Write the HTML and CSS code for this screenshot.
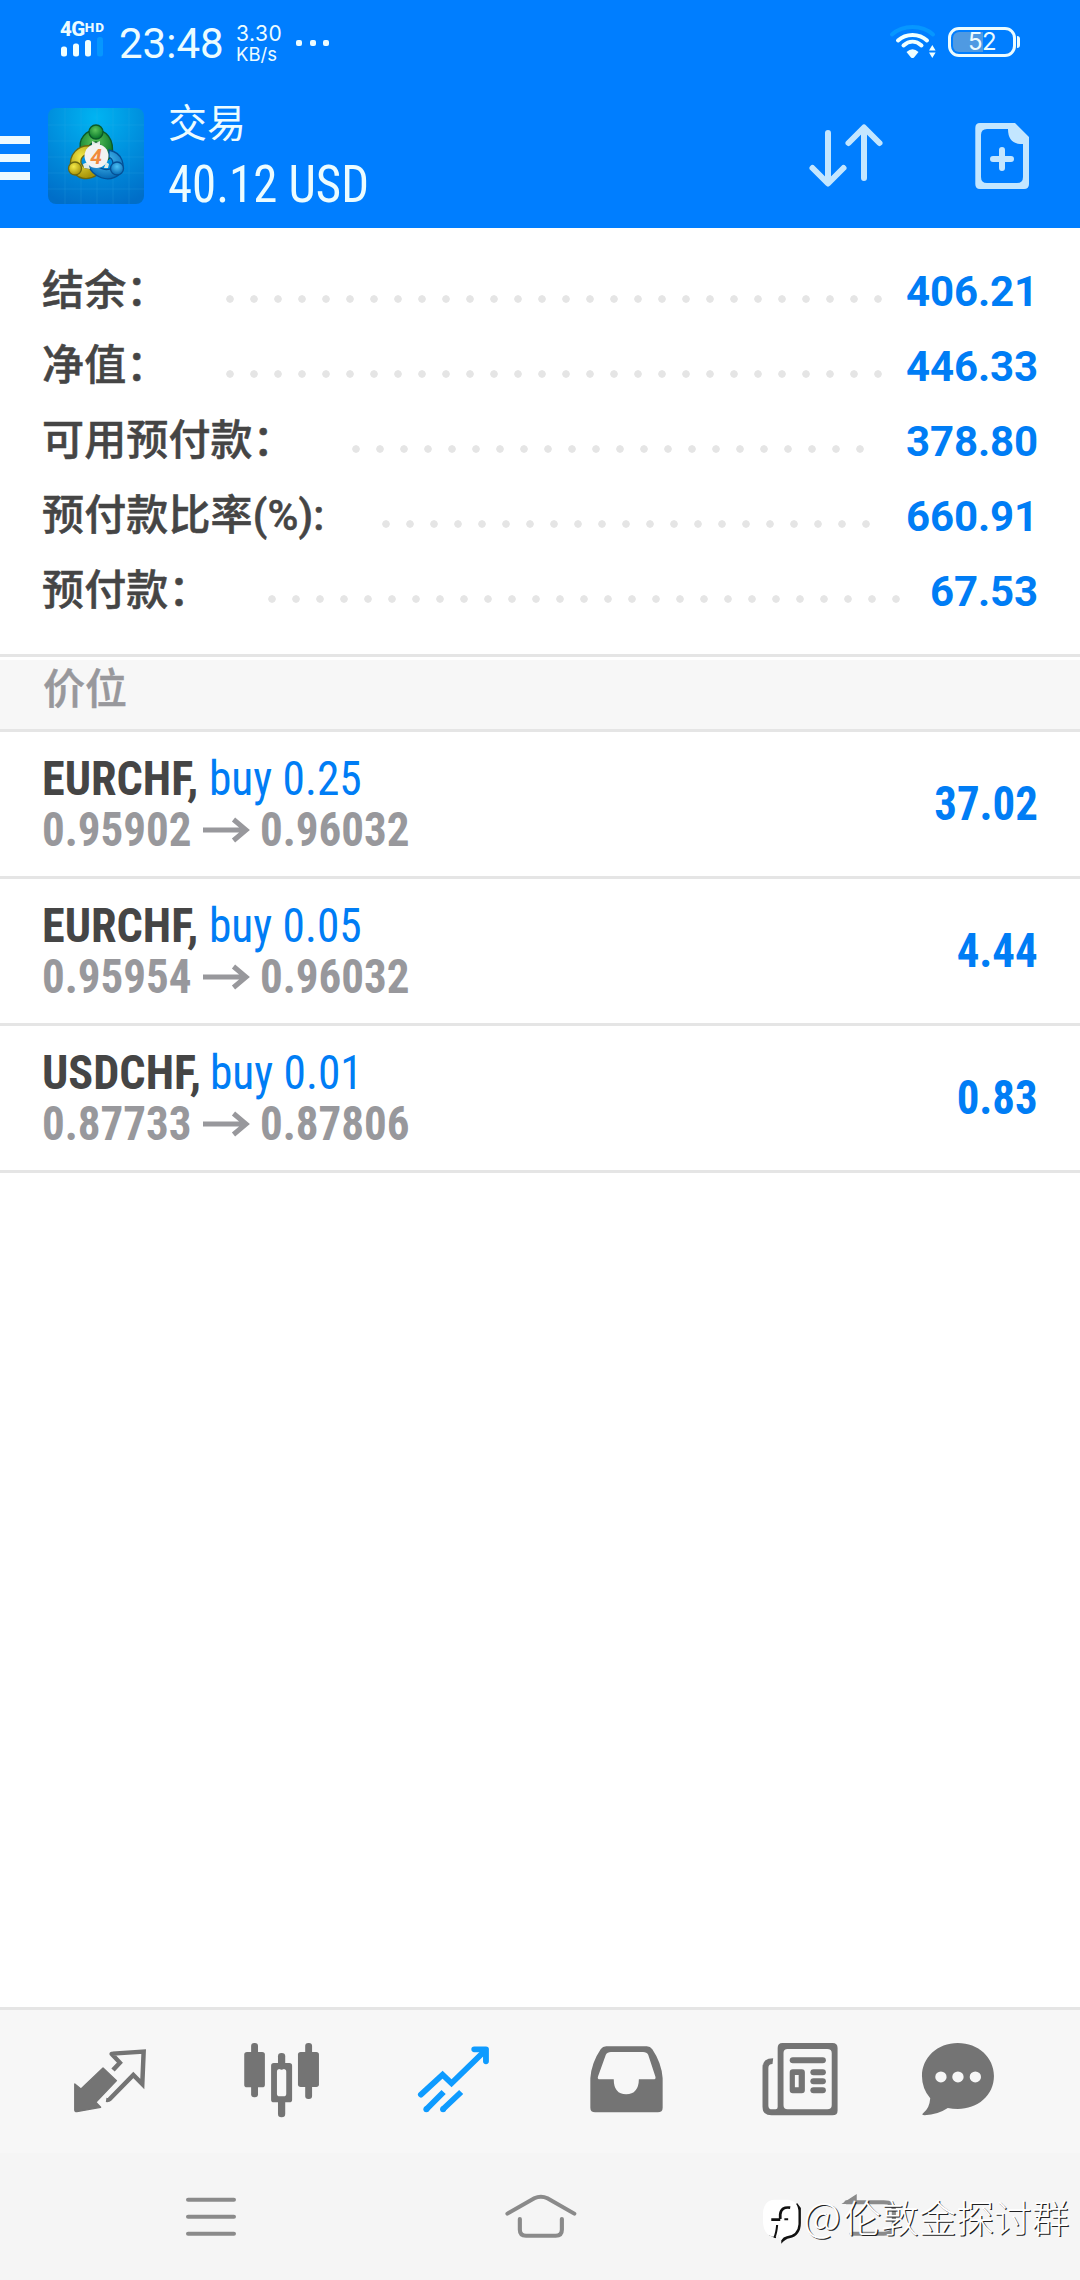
FILE: index.html
```html
<!DOCTYPE html>
<html lang="zh-CN">
<head>
<meta charset="utf-8">
<title>交易</title>
<link rel="stylesheet" href="styles.css">
</head>
<body>
<div class="screen">
  <header class="top">
    <div class="status">
      <div class="cell">
        <div class="net">4G<span class="hd">HD</span></div>
        <svg class="bars" viewBox="0 0 42 20" width="42" height="20">
          <g fill="#f0ffff"><rect x="0" y="9.500" width="6" height="10" rx="2.500"/><rect x="12" y="6.500" width="6" height="13" rx="2.500"/><rect x="24" y="3" width="6" height="16.500" rx="2.500"/></g>
          <rect x="36" y="0" width="6" height="19.500" rx="2.500" fill="#0697ff"/>
        </svg>
      </div>
      <div class="clock">23:48</div>
      <div class="speed"><span class="rate">3.30</span><span class="unit">KB/s</span></div>
      <div class="more"><i></i><i></i><i></i></div>
      <svg class="wifi" viewBox="889 24 50 36" width="50" height="36" fill="none" stroke-linecap="round">
        <path d="M892 34.500C903 24.500 922 24.500 933 34.500" stroke="#0697ff" stroke-width="4"/>
        <path d="M898 40.500C906 33 919 33 927 40.500M903.500 45.500C909 40.500 916 40.500 921.500 45.500" stroke="#f0ffff" stroke-width="4"/>
        <path d="M906.500 52Q912.500 46.500 918.500 52L914 57.500Q912.500 58.500 911 57.500Z" fill="#f0ffff"/>
        <path d="M929 50.500L932.300 45L935.600 50.500ZM929 52.500L932.300 58L935.600 52.500Z" fill="#f0ffff"/>
      </svg>
      <div class="battery"><span>52</span></div>
    </div>
    <div class="bar">
      <svg class="burger" viewBox="0 0 30 44" width="30" height="44" fill="#ecfaff"><rect width="30" height="8"/><rect y="18" width="30" height="8"/><rect y="36" width="30" height="8"/></svg>
      <svg class="logo" viewBox="48 108 96 96" width="96" height="96">
        <defs>
          <radialGradient id="bg" cx=".5" cy=".1" r=".95"><stop offset="0" stop-color="#00b4f2"/><stop offset=".5" stop-color="#0090de"/><stop offset="1" stop-color="#006ec8"/></radialGradient>
          <radialGradient id="g" cx=".45" cy=".35" r=".6"><stop offset="0" stop-color="#5cc45c"/><stop offset="1" stop-color="#0b7a2c"/></radialGradient>
          <radialGradient id="y" cx=".4" cy=".35" r=".65"><stop offset="0" stop-color="#f4ea4a"/><stop offset="1" stop-color="#a89408"/></radialGradient>
          <radialGradient id="b" cx=".5" cy=".35" r=".65"><stop offset="0" stop-color="#4cc0f4"/><stop offset="1" stop-color="#0468b4"/></radialGradient>
        </defs>
        <rect x="48" y="108" width="96" height="96" rx="8" fill="url(#bg)"/>
        <path d="M65 108V204M81 108V204M97 108V204M113 108V204M129 108V204M48 125H144M48 141H144M48 157H144M48 173H144M48 189H144" stroke="#3cb4f0" stroke-opacity=".18" fill="none"/>
        <g stroke-width="1.300">
          <path d="M81 152C77 138 87 130 96 130S115 138 112 156L104 163Q104 144 96 142Q88 143 87 152Z" fill="url(#g)" stroke="#0b5a2a"/>
          <path d="M92 146C78 144 68 155 71 168C76 180 88 181 97 175L92 168Q84 170 81 163Q80 154 92 154Z" fill="url(#y)" stroke="#6a6810"/>
          <path d="M109 150C123 153 126 166 120 174C108 184 93 177 88 165L97 166Q106 172 112 168Q115 160 109 157Z" fill="url(#b)" stroke="#064f94"/>
          <circle cx="96" cy="132" r="7" fill="url(#g)" stroke="#0b5a2a"/>
          <circle cx="75" cy="168.500" r="6.500" fill="url(#y)" stroke="#6a6810"/>
          <circle cx="117" cy="168.500" r="6.500" fill="url(#b)" stroke="#064f94"/>
        </g>
        <path d="M92 141L96 143L100 141V146H92ZM83 164L88 162L90 169L84 168ZM104 168L106 162L109 164L108 168Z" fill="#dfe9e4"/>
        <circle cx="96.500" cy="156" r="12" fill="#f2f2f2"/>
        <text x="96" y="163.500" text-anchor="middle" class="logo-num">4</text>
      </svg>
      <div class="titles">
        <div class="title">交易</div>
        <div class="sum cond">40.12 USD</div>
      </div>
      <svg class="sort" viewBox="808 122 76 68" width="76" height="68" fill="none" stroke="#c3e6ff" stroke-width="6" stroke-linecap="round" stroke-linejoin="round">
        <path d="M828 133V183M812.500 168L828 183.500L843.500 168M864 178V128M848.500 143L864 127.500L879.500 143"/>
      </svg>
      <svg class="order" viewBox="974 122 56 68" width="56" height="68">
        <path fill="#c3e6ff" fill-rule="evenodd" d="M980 123H1015L1029 137V184Q1029 189 1024 189H980Q975.300 189 975.300 184V128Q975.300 123 980 123ZM987 129Q981 129 981 135V177Q981 183 987 183H1017Q1023 183 1023 177V144H1020Q1008 143 1008 129Z"/>
        <path d="M1002 150V168M993 159H1011" stroke="#c3e6ff" stroke-width="6" stroke-linecap="round"/>
      </svg>
    </div>
  </header>

  <section class="account">
    <div class="line"><span class="label">结余：</span><i class="dots" style="--n:28"></i><b class="amount">406.21</b></div>
    <div class="line"><span class="label">净值：</span><i class="dots" style="--n:28"></i><b class="amount">446.33</b></div>
    <div class="line"><span class="label">可用预付款：</span><i class="dots" style="--n:22"></i><b class="amount">378.80</b></div>
    <div class="line"><span class="label">预付款比率(%):</span><i class="dots" style="--n:21"></i><b class="amount">660.91</b></div>
    <div class="line"><span class="label">预付款：</span><i class="dots" style="--n:27"></i><b class="amount">67.53</b></div>
  </section>

  <h2 class="group">价位</h2>

  <ul class="positions">
    <li class="pos">
      <div class="info">
        <div class="deal cond"><b class="symbol">EURCHF,</b> <span class="buy">buy 0.25</span></div>
        <div class="prices cond"><span>0.95902</span><svg class="to" viewBox="0 0 46 26" width="46" height="26"><path d="M0 13H43M30.500 2.500L43 13L30.500 23.500"/></svg><span>0.96032</span></div>
      </div>
      <b class="profit cond">37.02</b>
    </li>
    <li class="pos">
      <div class="info">
        <div class="deal cond"><b class="symbol">EURCHF,</b> <span class="buy">buy 0.05</span></div>
        <div class="prices cond"><span>0.95954</span><svg class="to" viewBox="0 0 46 26" width="46" height="26"><path d="M0 13H43M30.500 2.500L43 13L30.500 23.500"/></svg><span>0.96032</span></div>
      </div>
      <b class="profit cond">4.44</b>
    </li>
    <li class="pos">
      <div class="info">
        <div class="deal cond"><b class="symbol">USDCHF,</b> <span class="buy">buy 0.01</span></div>
        <div class="prices cond"><span>0.87733</span><svg class="to" viewBox="0 0 46 26" width="46" height="26"><path d="M0 13H43M30.500 2.500L43 13L30.500 23.500"/></svg><span>0.87806</span></div>
      </div>
      <b class="profit cond">0.83</b>
    </li>
  </ul>

  <nav class="tabs">
    <a class="tab"><svg preserveAspectRatio="none" viewBox="194.400 140 250 250">
      <path fill="#747474" stroke="#747474" stroke-width="4" stroke-linejoin="round" d="M217 281L235 296L299 233L338 271L278 336L292 351L223 364Q217 364 217 359Z"/>
      <path fill="none" stroke="#747474" stroke-width="13" d="M328 239L348 217L325 192Q323 190 327 190L417 184L413 281L387 254L318 327Q315 330 308 329"/>
    </svg></a>
    <a class="tab"><svg preserveAspectRatio="none" viewBox="693.800 140 250 250" fill="#747474">
      <rect x="729" y="158" width="20" height="163" rx="9"/><rect x="709" y="185" width="60" height="106" rx="8"/>
      <rect x="886" y="158" width="20" height="168" rx="9"/><rect x="865" y="185" width="61" height="105" rx="8"/>
      <rect x="807" y="188" width="21" height="50" rx="10"/><rect x="807" y="325" width="21" height="56" rx="10"/>
      <path fill-rule="evenodd" d="M795 218H840Q848 218 848 226V328Q848 336 840 336H795Q787 336 787 328V226Q787 218 795 218ZM812 236Q804 236 804 244V310Q804 318 812 318H823Q831 318 831 310V244Q831 236 823 236Z"/>
    </svg></a>
    <a class="tab"><svg preserveAspectRatio="none" viewBox="1193.300 140 250 250" fill="none" stroke="#0e9bff" stroke-width="17">
      <path d="M1222 313L1285 253L1311 279L1408 181" stroke-linecap="round"/>
      <path d="M1377 177H1411V213" stroke-linecap="round" stroke-linejoin="round"/>
      <path d="M1288 305L1238 357M1339 305L1286 357"/>
      <g fill="#0e9bff" stroke="none"><circle cx="1238" cy="357" r="8.800"/><circle cx="1286.500" cy="357" r="8.800"/></g>
    </svg></a>
    <a class="tab"><svg preserveAspectRatio="none" viewBox="124.700 140 250 250" fill="#747474">
      <path fill-rule="evenodd" d="M192 168H310Q320 168 326 177Q353 218 356 264V352Q356 366 342 366H160Q146 366 146 352V264Q149 218 176 177Q182 168 192 168ZM206 185Q195 185 191 193L168 259Q166 267 174 267H214Q214 312 250 312T287 267H329Q337 267 335 259L314 193Q310 185 299 185Z"/>
    </svg></a>
    <a class="tab"><svg preserveAspectRatio="none" viewBox="624.200 140 250 250" fill="#747474">
      <path fill-rule="evenodd" d="M704 158H849Q864 158 864 173V361Q864 375 849 375H672Q646 375 646 349V232Q646 204 677 204L675 221Q663 221 663 233V346Q663 357 674 357H684Q690 357 690 350V173Q690 158 704 158ZM719 176Q707 176 707 188V344Q707 357 719 357H834Q847 357 847 344V188Q847 176 834 176Z"/>
      <rect x="725" y="201" width="105" height="18" rx="9"/><rect x="785" y="237" width="45" height="18" rx="9"/><rect x="785" y="264" width="45" height="18" rx="9"/><rect x="785" y="291" width="45" height="18" rx="9"/>
      <path fill-rule="evenodd" d="M734 237H760Q769 237 769 246V300Q769 309 760 309H734Q725 309 725 300V246Q725 237 734 237ZM740 254V291H751V254Z"/>
    </svg></a>
    <a class="tab"><svg preserveAspectRatio="none" viewBox="1123.600 140 250 250" fill="#747474">
      <path d="M1213 158C1273 158 1318 202 1318 257C1318 316 1270 356 1213 356Q1198 356 1184 353Q1155 373 1117 375Q1105 374 1113 368Q1131 354 1133 324Q1109 295 1109 257C1109 202 1154 158 1213 158Z"/>
      <g fill="#f7f7f7"><circle cx="1164" cy="260" r="16.500"/><circle cx="1213.500" cy="260" r="16.500"/><circle cx="1264" cy="260" r="16.500"/></g>
    </svg></a>
  </nav>

  <nav class="system">
    <svg class="sys" preserveAspectRatio="none" viewBox="540 610 145 145" width="50" height="48.300"><path d="M546 630H679M546 681H679M546 732H679"/></svg>
    <svg class="sys" preserveAspectRatio="none" viewBox="1464 610 209 145" width="72" height="48.300"><path d="M1474 672L1552 626Q1571 616 1590 626L1668 672M1510 688V720Q1510 738 1528 738H1614Q1632 738 1632 720V688"/></svg>
    <svg class="sys" preserveAspectRatio="none" viewBox="880 610 160 145" width="55" height="48.300"><path d="M905 732H998Q1028 732 1028 708V662Q1028 638 998 638H890"/><path d="M882 641L918 617V641Z" fill="#8a8a8a" stroke-width="4"/></svg>
  </nav>

  <div class="mark">
    <svg preserveAspectRatio="none" viewBox="644 625 118 140" width="40.600" height="46.700">
      <path fill="#111" d="M664 736L684 746L686 738H700V762Q712 748 724 746Q757 738 757 700V655L746 640Z"/>
      <path fill="#fff" d="M680 630H716Q750 632 750 668V704Q748 736 716 740Q706 742 700 752L692 738L684 742Q650 740 647 700V668Q650 632 680 630Z"/>
      <path fill="none" stroke="#111" stroke-width="8" d="M726 654Q700 650 697 674V688M671 690H697"/>
      <path fill="none" stroke="#111" stroke-width="6" d="M688 706Q686 730 680 744M709 689H720"/>
    </svg>
    <span class="mark-text"><span class="at">@</span>伦敦金探讨群</span>
  </div>
</div>
</body>
</html>
```
FILE: styles.css
```css
* { box-sizing: border-box; }
body { margin: 0; background: #fff; }
.screen {
  position: relative;
  width: 1080px;
  height: 2280px;
  display: flex;
  flex-direction: column;
  overflow: hidden;
  background: #fff;
  color: #454545;
  font-family: Roboto, "Noto Sans CJK SC", sans-serif;
}
svg { display: block; flex: none; overflow: visible; }
.cond { font-family: "Roboto Condensed", Roboto, sans-serif; font-stretch: 75%; }

/* header */
.top { height: 228px; background: #007eff; color: #ecfcff; }
.status { height: 84px; display: flex; align-items: flex-start; padding: 0 60px; }
.cell { width: 59px; padding-top: 20px; }
.net { height: 17px; line-height: 19px; font-size: 20.500px; font-weight: 800; letter-spacing: -.5px; white-space: nowrap; }
.hd { font-size: 13.500px; position: relative; top: -4px; letter-spacing: 1px; }
.bars { margin: 0 0 0 1px; }
.clock { width: 117px; padding-top: 19px; font-size: 42px; line-height: 50px; }
.speed { width: 59px; padding-top: 23px; display: flex; flex-direction: column; font-family: Inter, sans-serif; }
.rate { font-size: 21px; line-height: 21px; letter-spacing: .5px; }
.unit { font-size: 18.500px; line-height: 20px; }
.more { display: flex; gap: 7.500px; padding: 40px 0 0 1px; flex: 1; }
.more i { width: 6px; height: 6px; border-radius: 2px; background: #ecfcff; }
.wifi { margin-top: 24px; }
.battery {
  position: relative;
  width: 68px; height: 30px;
  margin: 27px 4px 0 9px;
  padding: 2px;
  border: 3px solid #ecfcff;
  border-radius: 11px;
  background: linear-gradient(90deg, #4f9ae2 30px, transparent 30px) content-box;
  font: 400 24px/20px Inter, sans-serif;
  letter-spacing: -.5px;
  text-align: center;
}
.battery::after { content: ""; position: absolute; right: -7px; top: 6px; width: 3px; height: 12px; border-radius: 0 3px 3px 0; background: #ecfcff; }
.bar { height: 144px; display: flex; align-items: flex-start; }
.burger { margin-top: 52px; }
.logo { margin: 24px 0 0 18px; }
.logo-num { font: italic 700 21px Roboto, sans-serif; fill: #f08a3c; }
.titles { flex: 1; padding: 17px 0 0 24px; }
.title { font-size: 39px; line-height: 46px; }
.sum { font-size: 51px; line-height: 60px; margin-top: 8px; white-space: nowrap; transform: scaleX(.957); transform-origin: 0 0; }
.sort { margin: 38px 90px 0 0; }
.order { margin: 38px 50px 0 0; }

/* account summary */
.account { height: 429px; padding: 24px 42px 0; border-bottom: 3px solid #e5e5e5; }
.line { height: 75px; display: flex; align-items: flex-start; }
.label { font-size: 42px; line-height: 78px; font-weight: 500; white-space: nowrap; letter-spacing: .15px; -webkit-text-stroke: .5px currentColor; }
.dots {
  width: calc(var(--n) * 24px);
  height: 8px;
  margin: 43px 0 0 57.500px;
  background: radial-gradient(circle at 4px 4px, #e5e5e5 3.400px, transparent 4.100px) 0 0 / 24px 8px repeat-x;
}
.amount { margin-left: auto; color: #007df5; font-size: 42px; line-height: 80px; letter-spacing: -.1px; }

/* open positions */
.group { margin: 3px 0 0; height: 72px; padding: 0 43px; background: #f7f7f7; border-bottom: 3px solid #e5e5e5; font-size: 42px; line-height: 60px; font-weight: 500; color: #98989c; -webkit-text-stroke: .5px currentColor; }
.positions { flex: 1; margin: 0; padding: 0; list-style: none; }
.pos { height: 147px; display: flex; justify-content: space-between; padding: 0 42px; border-bottom: 3px solid #e5e5e5; }
.info { padding-top: 21px; }
.deal { font-size: 48px; line-height: 51px; height: 51px; white-space: nowrap; }
.symbol { display: inline-block; transform: scaleX(.962); transform-origin: 0 0; }
.buy { display: inline-block; margin-left: -7px; color: #007df5; transform: scaleX(.945); transform-origin: 0 0; }
.pos:last-child .buy { margin-left: -8.700px; }
.prices { display: flex; align-items: center; gap: 12px; font-size: 48px; line-height: 51px; font-weight: 700; color: #98989c; }
.prices span { transform: scaleX(.938); transform-origin: 0 0; }
.prices span:first-child { margin-right: -10.500px; }
.prices span:last-child { margin-left: -1px; }
.to { fill: none; stroke: #98989c; stroke-width: 5; }
.profit { font-size: 48px; line-height: 56px; padding-top: 44px; color: #007df5; transform: scaleX(.935); transform-origin: 100% 0; }

/* bottom bars */
.tabs { height: 146px; display: flex; align-items: center; padding: 0 24px 6px; background: #f7f7f7; border-top: 3px solid #e5e5e5; }
.tab { flex: 1; display: flex; justify-content: center; }
.tab svg { width: 86.100px; height: 83.300px; }
.system { height: 127px; display: flex; align-items: flex-start; background: #f5f5f5; padding: 40px 182px 0 186px; justify-content: space-between; }
.sys { fill: none; stroke: #8a8a8a; stroke-width: 12; stroke-linecap: round; }

/* author mark laid over the system bar */
.mark { position: absolute; left: 762px; top: 2198px; display: flex; align-items: flex-start; white-space: nowrap; }
.mark-text { margin-left: 1px; font: 300 37.600px/32px "Noto Sans CJK SC", sans-serif; color: #fff; text-shadow: 1.200px 1.200px 0 #222; }
.at { display: inline-block; width: 40px; font-size: 41px; }
```
